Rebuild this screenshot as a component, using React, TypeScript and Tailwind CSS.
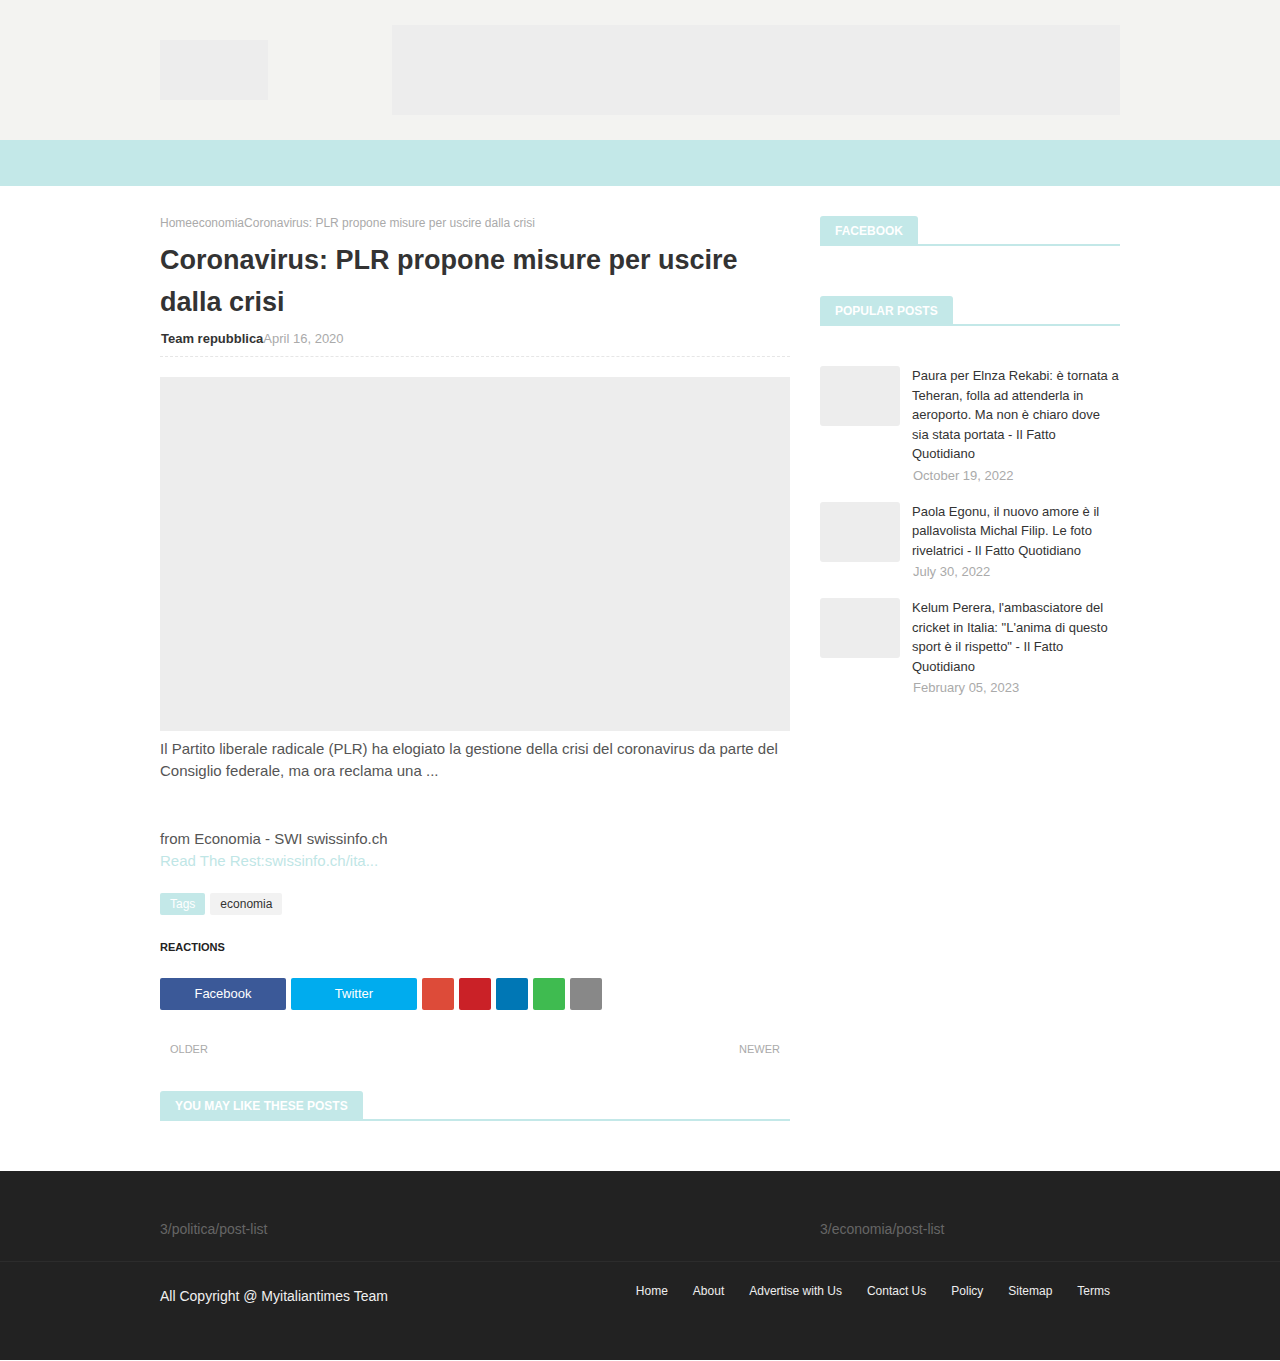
import React from "react";

const teal = "bg-[#c3e8e8]";

function WidgetTitle({ title }: { title: string }) {
  return (
    <div className="flex border-b-2 border-[#c3e8e8]">
      <div className={`${teal} h-[28px] px-[15px] rounded-t-[3px] text-[12px] leading-[30px] font-bold text-white uppercase overflow-hidden`}>
        {title}
      </div>
    </div>
  );
}

const posts = [
  {
    title:
      "Paura per Elnza Rekabi: è tornata a Teheran, folla ad attenderla in aeroporto. Ma non è chiaro dove sia stata portata - Il Fatto Quotidiano",
    date: "October 19, 2022",
  },
  {
    title: "Paola Egonu, il nuovo amore è il pallavolista Michal Filip. Le foto rivelatrici - Il Fatto Quotidiano",
    date: "July 30, 2022",
  },
  {
    title:
      'Kelum Perera, l\'ambasciatore del cricket in Italia: "L\'anima di questo sport è il rispetto" - Il Fatto Quotidiano',
    date: "February 05, 2023",
  },
];

export default function App() {
  return (
    <div className="font-['Liberation_Sans',Arial,sans-serif] bg-white text-[#333]">
      {/* Header */}
      <div className="bg-[#f3f3f1] h-[140px]">
        <div className="w-[960px] mx-auto h-full flex items-center justify-between">
          <div className="w-[108px] h-[60px] bg-[#ededed]" />
          <div className="w-[728px] h-[90px] bg-[#ededed]" />
        </div>
      </div>
      {/* Nav */}
      <div className={`${teal} h-[46px]`} />

      {/* Content */}
      <div className="w-[960px] mx-auto pt-[30px] pb-[50px] flex gap-[30px]">
        <div className="w-[630px]">
          <div className="text-[12px] leading-[14px] text-[#aaa]">
            <span>Home</span>
            <span>economia</span>
            <span>Coronavirus: PLR propone misure per uscire dalla crisi</span>
          </div>
          <h1 className="mt-[9px] text-[27px] leading-[42px] font-bold text-[#333]">
            Coronavirus: PLR propone misure per uscire dalla crisi
          </h1>
          <div className="mt-[6px] pb-[7px] border-b border-dashed border-[#e6e6e6] text-[13px] leading-[20px]">
            <span className="font-bold text-[#333] pl-px">Team repubblica</span>
            <span className="text-[#aaa]">April 16, 2020</span>
          </div>
          <div className="mt-[20px] h-[354px] bg-[#ededed]" />
          <p className="mt-[7px] text-[15px] leading-[22px] text-[#555]">
            Il Partito liberale radicale (PLR) ha elogiato la gestione della crisi del coronavirus da parte del
            Consiglio federale, ma ora reclama una ...
          </p>
          <p className="mt-[46px] text-[15px] leading-[22px] text-[#555]">from Economia - SWI swissinfo.ch</p>
          <p className="text-[15px] leading-[22px] text-[#bfe6e6]">Read The Rest:swissinfo.ch/ita...</p>

          <div className="mt-[21px] flex gap-[5px] text-[12px] leading-[22px]">
            <span className={`${teal} text-white px-[10px] rounded-[2px]`}>Tags</span>
            <span className="bg-[#f2f2f2] text-[#333] px-[10px] rounded-[2px]">economia</span>
          </div>

          <div className="mt-[25px] text-[11px] leading-[14px] font-bold text-[#222]">REACTIONS</div>

          <div className="mt-[24px] flex gap-[5px] text-[13px] text-white">
            <div className="w-[126px] h-[32px] leading-[32px] text-center bg-[#3b5998] rounded-[2px]">Facebook</div>
            <div className="w-[126px] h-[32px] leading-[32px] text-center bg-[#00acee] rounded-[2px]">Twitter</div>
            <div className="w-[32px] h-[32px] bg-[#dd4b39] rounded-[2px]" />
            <div className="w-[32px] h-[32px] bg-[#ca2127] rounded-[2px]" />
            <div className="w-[32px] h-[32px] bg-[#0077b5] rounded-[2px]" />
            <div className="w-[32px] h-[32px] bg-[#3fbb50] rounded-[2px]" />
            <div className="w-[32px] h-[32px] bg-[#888] rounded-[2px]" />
          </div>

          <div className="mt-[32px] flex justify-between px-[10px] text-[11px] leading-[14px] text-[#aaa]">
            <span>OLDER</span>
            <span>NEWER</span>
          </div>

          <div className="mt-[35px] flex border-b-2 border-[#c3e8e8]">
            <div className={`${teal} h-[28px] px-[15px] rounded-t-[3px] text-[12px] leading-[30px] font-bold text-white overflow-hidden`}>
              YOU MAY LIKE THESE POSTS
            </div>
          </div>
        </div>

        {/* Sidebar */}
        <div className="w-[300px]">
          <WidgetTitle title="FACEBOOK" />
          <div className="mt-[50px]">
            <WidgetTitle title="POPULAR POSTS" />
          </div>
          <div className="mt-[40px] flex flex-col gap-[16px]">
            {posts.map((p, i) => (
              <div key={i} className="flex gap-[12px]">
                <div className="w-[80px] h-[60px] shrink-0 bg-[#ededed] rounded-[3px]" />
                <div>
                  <div className="text-[13px] leading-[19.5px] text-[#333]">{p.title}</div>
                  <div className="mt-[2px] text-[13px] leading-[20px] text-[#aaa] pl-px">{p.date}</div>
                </div>
              </div>
            ))}
          </div>
        </div>
      </div>

      {/* Footer */}
      <div className="bg-[#222]">
        <div className="h-[91px] border-b border-[#2c2c2c]">
          <div className="w-[960px] mx-auto pt-[48px] flex gap-[30px] text-[14px] leading-[20px] text-[#666]">
            <div className="w-[630px]">3/politica/post-list</div>
            <div className="w-[300px]">3/economia/post-list</div>
          </div>
        </div>
        <div className="h-[98px]">
          <div className="w-[960px] mx-auto flex justify-between pt-[22px]">
            <div className="text-[14px] leading-[20px] text-[#f0f0f0] pt-[2px]">All Copyright @ Myitaliantimes Team</div>
            <div className="flex gap-[25px] pr-[10px] text-[12px] leading-[20px] text-[#eee] -mt-[3px]">
              <span>Home</span>
              <span>About</span>
              <span>Advertise with Us</span>
              <span>Contact Us</span>
              <span>Policy</span>
              <span>Sitemap</span>
              <span>Terms</span>
            </div>
          </div>
        </div>
      </div>
    </div>
  );
}
